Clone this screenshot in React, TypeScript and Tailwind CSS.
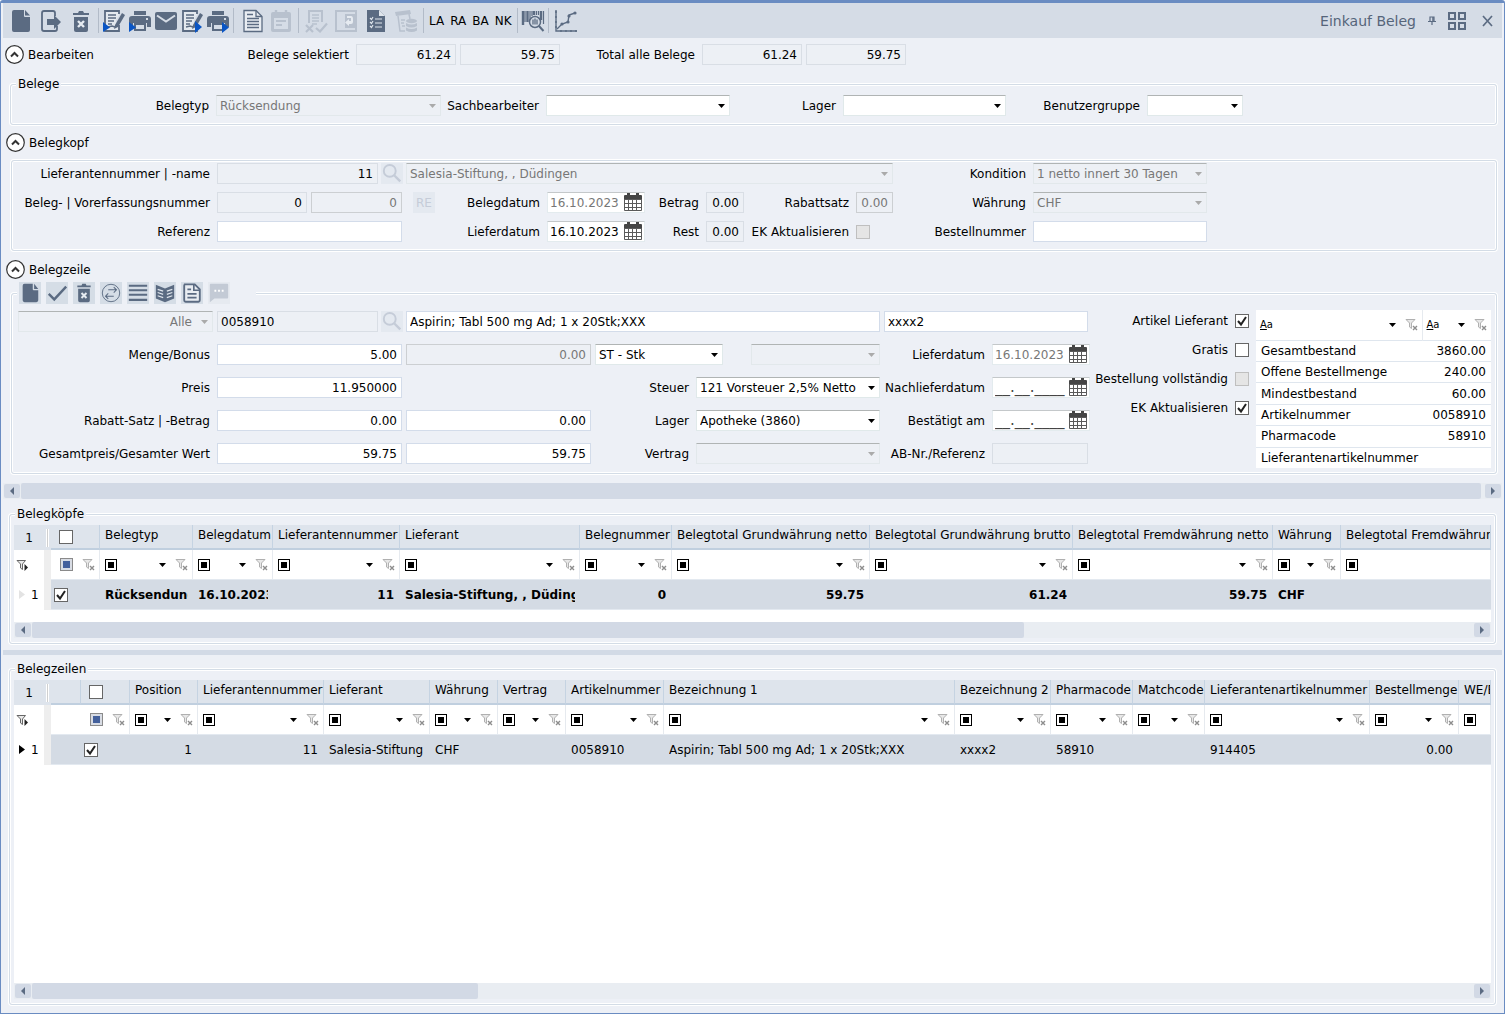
import React from 'react';
import clsx from 'clsx';

const DARK = '#5b6b82';
const LIGHT = '#b8c1ce';

/* ---------- icons ---------- */

function Icon({ children, size = 24 }: { children: React.ReactNode; size?: number }) {
  return (
    <svg width={size} height={size} viewBox="0 0 24 24" fill="none" aria-hidden="true" className="block">
      {children}
    </svg>
  );
}

const FileIcon = () => (
  <Icon>
    <path d="M5 1h10v6q0 1 1 1h5v13q0 2-2 2H5q-2 0-2-2V3q0-2 2-2z" fill={DARK} />
    <path d="M16 1l5 5.500h-5z" fill={DARK} />
  </Icon>
);

const ExitIcon = () => (
  <Icon>
    <path d="M16 7V4q0-2-2-2H5Q3 2 3 4v16q0 2 2 2h11q2 0 2-2v-3" stroke={DARK} strokeWidth="1.800" />
    <path d="M8 10h7V6l7 7-7 7v-4H8z" fill={DARK} />
  </Icon>
);

const TrashIcon = () => (
  <Icon>
    <path d="M4 4h5l1-2h4l1 2h5v2H4z" fill={DARK} />
    <path d="M5 8h14v13q0 2-2 2H7q-2 0-2-2z" fill={DARK} />
    <path d="M9 12l6 6M15 12l-6 6" stroke="#e6ebf1" strokeWidth="2.400" />
  </Icon>
);

const EditDocIcon = ({ play }: { play: 'left' | 'right' }) => (
  <Icon>
    <path d="M3 2h14v4l-3 5v4l3-1v8H3z" fill="#e4e9ef" />
    <path d="M17 5V2H3v20h14v-6" stroke={DARK} strokeWidth="1.800" />
    <path d="M6 6h8M6 9h8M6 12h6M6 15h4M6 18l4-1 3 1" stroke={DARK} strokeWidth="1.400" />
    <path d="M20 4l3 2-7 12-4 2 1-4z" fill={DARK} />
    {play === 'left' ? <path d="M1 13l7 5.500L1 23z" fill="#0a55c4" /> : <path d="M15 12l7 6-7 6z" fill="#0a55c4" />}
  </Icon>
);

const PrinterIcon = ({ play }: { play: 'left' | 'right' }) => (
  <Icon>
    <path d="M6 2h12v4H6z" fill={DARK} />
    <path d="M4 7h16q3 0 3 3v8h-4v-4H5v4H1v-8q0-3 3-3z" fill={DARK} />
    <path d="M7 15h10v6H7z" stroke={DARK} strokeWidth="2" />
    <rect x="18" y="9" width="2" height="2" fill="#d5dce6" />
    {play === 'left' ? <path d="M1 13l7 5.500L1 23z" fill="#0a55c4" /> : <path d="M16 13l7 5.500-7 5.500z" fill="#0a55c4" />}
  </Icon>
);

const MailIcon = () => (
  <Icon>
    <rect x="1" y="3" width="22" height="18" rx="2" fill={DARK} />
    <path d="M3 6.500l9 6 9-6" stroke="#d5dce6" strokeWidth="2" />
  </Icon>
);

const LinesDocIcon = () => (
  <Icon>
    <path d="M3 1.500h12l6 6v15H3z" fill="#e9edf2" stroke={DARK} strokeWidth="1.300" />
    <path d="M15 1.500v6h6" stroke={DARK} strokeWidth="1.300" />
    <path d="M6 5.500h6M6 9.500h12M6 12.500h12M6 15.500h12M6 18.500h12" stroke={DARK} strokeWidth="1.400" />
  </Icon>
);

const CalendarNoteIcon = () => (
  <Icon>
    <path d="M4 3h16q2 0 2 2v16q0 2-2 2H4q-2 0-2-2V5q0-2 2-2z" fill={LIGHT} />
    <path d="M5 9h14v11H5z" fill="#d5dce6" />
    <path d="M7 1v5M17 1v5" stroke={LIGHT} strokeWidth="2.400" />
    <path d="M7 12h10M7 16h6" stroke={LIGHT} strokeWidth="2" />
  </Icon>
);

const DocCheckIcon = () => (
  <Icon>
    <path d="M5 14V2h13v11" stroke={LIGHT} strokeWidth="2" />
    <path d="M8 6h7M8 9h7M8 12h7M8 15h5" stroke={LIGHT} strokeWidth="1.500" />
    <path d="M2 16l7 7M9 16l-7 7M12 19l4 3.500 7-8" stroke={LIGHT} strokeWidth="2.200" />
  </Icon>
);

const DoorIcon = () => (
  <Icon>
    <path d="M2 2h20v20H2z" stroke={LIGHT} strokeWidth="2" />
    <path d="M11 5h11v14H11z" fill={LIGHT} />
    <path d="M13 7h4q2 0 2 3v3q0 2-2 2h-2v2l-4-3.500 4-3.500v2h2V9h-4z" fill="#e6ebf1" />
  </Icon>
);

const ChecklistIcon = () => (
  <Icon>
    <path d="M3 1h12l6 6v16H3z" fill={DARK} />
    <path d="M15 1v6h6z" fill="#dfe5ec" />
    <path d="M6 9l1.500 1.500L9 8M6 13l1.500 1.500L9 12M6 17l1.500 1.500L9 16M11 10h7M11 14h7M11 18h7" stroke="#dfe5ec" strokeWidth="1.200" />
  </Icon>
);

const CoinsIcon = () => (
  <Icon>
    <path d="M1 3l15-2 1 4L2 7z" fill={LIGHT} />
    <path d="M4 7l2 15h5M15 5l1 5" stroke={LIGHT} strokeWidth="1.500" />
    <path d="M7 11h4M7 14h3M8 17h3" stroke={LIGHT} strokeWidth="1.300" />
    <ellipse cx="17.500" cy="12" rx="5.500" ry="2.200" fill={LIGHT} />
    <path d="M12 14q5.500 3 11 0v3q-5.500 3-11 0zM12 18.500q5.500 3 11 0v3q-5.500 3-11 0z" fill={LIGHT} />
  </Icon>
);

const BarcodeIcon = () => (
  <Icon>
    <path d="M2 2v14M6.500 2v11M13 2v4M20 2v9" stroke={DARK} strokeWidth="2.400" />
    <path d="M4 2v11M9 2v9M11 2v5M15.500 2v4M17.500 2v4M22.500 2v13" stroke={DARK} strokeWidth="1.200" />
    <circle cx="14" cy="13" r="5.500" stroke={DARK} strokeWidth="1.500" fill="#d5dce6" />
    <path d="M12 10.500v5M14 9.500v6M16 10.500v5" stroke={DARK} strokeWidth="1.300" />
    <path d="M18 17l4.500 5" stroke={DARK} strokeWidth="2" />
  </Icon>
);

const ChartIcon = () => (
  <Icon>
    <path d="M2 1v21h21M1 3h2M1 8h2M1 13h2M1 18h2M7 23v-2M12 23v-2M17 23v-2M22 23v-2" stroke={DARK} strokeWidth="1.400" />
    <path d="M3 20l5-5 6-2 1-7 6-2" stroke={DARK} strokeWidth="1.400" />
    <g fill={DARK}>
      <circle cx="8" cy="15" r="1.600" />
      <circle cx="14" cy="13" r="1.600" />
      <circle cx="15" cy="7" r="1.600" />
      <circle cx="21" cy="4" r="1.600" />
    </g>
  </Icon>
);

const CheckIcon = () => (
  <Icon size={22}>
    <path d="M3 13l6 6L22 5" stroke={DARK} strokeWidth="2.600" />
  </Icon>
);

const SwapIcon = () => (
  <Icon size={22}>
    <circle cx="12" cy="12" r="9.500" stroke={DARK} strokeWidth="1" />
    <path d="M9 8.500h8.500M15 5.500l3 3-3 3M15 15.500H6.500M9 12.500l-3 3 3 3" stroke={DARK} strokeWidth="1.100" />
  </Icon>
);

const RowsIcon = () => (
  <Icon size={22}>
    <path d="M2 4h20M2 9h20M2 14h20M2 19.500h20" stroke={DARK} strokeWidth="2.200" />
  </Icon>
);

const BookIcon = () => (
  <Icon size={22}>
    <path d="M2 3l10 4 10-4v15l-10 4-10-4z" fill={DARK} />
    <path d="M4 8l6 2M4 11.500l6 2M4 15l6 2M20 8l-6 2M20 11.500l-6 2M20 15l-6 2" stroke="#dfe5ec" strokeWidth="1.300" />
  </Icon>
);

const NoteIcon = () => (
  <Icon size={22}>
    <path d="M4 2.500h11l5.500 5.500v12q0 1.500-1.500 1.500H5q-1.500 0-1.500-1.500V4z" stroke={DARK} strokeWidth="2" fill="#e9edf2" />
    <path d="M14 2.500V9h6.500M7 8h4M7 13h10M7 17h10" stroke={DARK} strokeWidth="1.800" />
  </Icon>
);

const ChatIcon = () => (
  <Icon size={22}>
    <path d="M3 2h18q1 0 1 1v14q0 1-1 1H7l-5 4V3q0-1 1-1z" fill="#c3cad5" />
    <path d="M7 9.500h2M11 9.500h2M15 9.500h2" stroke="#fff" strokeWidth="2" />
  </Icon>
);

const SearchIcon = () => (
  <Icon size={21}>
    <circle cx="10" cy="9" r="6.800" stroke="#c5ccd8" strokeWidth="2.200" />
    <path d="M15 14l7 7" stroke="#c5ccd8" strokeWidth="2.800" />
  </Icon>
);

const CalendarIcon = () => (
  <svg width="18" height="19" viewBox="0 0 18 19" aria-hidden="true" className="block">
    <path d="M0 3q0-1 1-1h16q1 0 1 1v4H0zM3 0h3v4H3zM12 0h3v4h-3z" fill="#454545" />
    <path d="M0 6h18v11q0 1-1 1H1q-1 0-1-1z" fill="#5a5a5a" />
    <g fill="#fff">
      {[7, 11, 15].map((y) => [1, 5, 9, 13].map((x) => <rect key={`${x}-${y}`} x={x} y={y} width={x === 13 ? 4 : 3} height={y === 15 ? 2 : 3} />))}
    </g>
  </svg>
);

const Arrow = ({ color = '#000' }: { color?: string }) => (
  <svg width="7" height="4" viewBox="0 0 7 4" aria-hidden="true" className="block">
    <path d="M0 0h7L3.500 4z" fill={color} />
  </svg>
);

const FunnelIcon = () => (
  <svg width="13" height="13" viewBox="0 0 13 13" fill="none" aria-hidden="true" className="block">
    <path d="M1 1.500h9L6.500 5v5.500L4.500 9V5z" fill="#e8e8e8" stroke="#b0b0b0" />
    <path d="M8 8l4 4M12 8l-4 4" stroke="#8d8d8d" strokeWidth="1.400" />
  </svg>
);

const FunnelPlayIcon = () => (
  <svg width="13" height="12" viewBox="0 0 13 12" fill="none" aria-hidden="true" className="block">
    <path d="M1 1.500h8.500L6.500 5v5.500L4.500 9V5z" fill="#e8e8e8" stroke="#666" />
    <path d="M8.500 5l3.500 3.500L8.500 12z" fill="#222" />
  </svg>
);

/* ---------- form controls ---------- */

function Label({ htmlFor, className, children }: { htmlFor?: string; className?: string; children: React.ReactNode }) {
  return (
    <label htmlFor={htmlFor} className={clsx('shrink-0 whitespace-nowrap pr-[7px] text-right', className)}>
      {children}
    </label>
  );
}

interface FieldProps {
  id: string;
  value?: string;
  label?: string;
  className?: string;
  tone?: 'edit' | 'read' | 'off';
  left?: boolean;
}

function Field({ id, value = '', label, className, tone = 'edit', left }: FieldProps) {
  return (
    <input
      id={id}
      aria-label={label}
      defaultValue={value}
      readOnly={tone === 'read'}
      disabled={tone === 'off'}
      className={clsx(
        'h-[21px] min-w-0 shrink-0 border',
        left ? 'px-[3px]' : 'px-1 text-right',
        tone === 'edit' && 'border-[#d3dcea] bg-white',
        tone === 'read' && 'border-[#d9dee5] bg-[#edf0f5]',
        tone === 'off' && 'border-[#cccfd2] bg-[#edf0f5] text-[#777]',
        className,
      )}
    />
  );
}

function Select({ id, value = '', label, className, off, right }: { id: string; value?: string; label?: string; className?: string; off?: boolean; right?: boolean }) {
  return (
    <span className={clsx('grid shrink-0 items-center', className)}>
      <select
        id={id}
        aria-label={label}
        disabled={off}
        className={clsx(
          'col-start-1 row-start-1 h-[21px] w-full appearance-none border border-t-[#b0b4b4] pl-[3px] pr-5 opacity-100',
          off ? 'border-[#e2e8eb] bg-[#edf0f5] text-[#777]' : 'border-[#e0e9ea] bg-white',
          right && 'text-right [text-align-last:right]',
        )}
      >
        <option>{value}</option>
      </select>
      <span className="pointer-events-none col-start-1 row-start-1 justify-self-end pr-[5px]">
        <Arrow color={off ? '#aaa' : '#000'} />
      </span>
    </span>
  );
}

function DateField({ id, value, dim, empty }: { id: string; value?: string; dim?: boolean; empty?: boolean }) {
  return (
    <span className="flex h-[21px] w-[98px] shrink-0 items-center justify-between border border-[#e3ebee] border-t-[#c4c8ca] bg-white pr-[2px]">
      <input
        id={id}
        defaultValue={empty ? '__.__.____' : value}
        className={clsx('h-[19px] w-[75px] bg-transparent pl-[2px]', dim && 'text-[#777]', empty && 'text-[15px] text-[#444]')}
      />
      <button type="button" aria-label="Kalender">
        <CalendarIcon />
      </button>
    </span>
  );
}

function SearchButton({ title }: { title: string }) {
  return (
    <button type="button" aria-label={title} className="mx-[3px] h-[21px] w-[22px] shrink-0 bg-[#e4e9f0]">
      <SearchIcon />
    </button>
  );
}

function Checkbox({ id, label, checked, disabled }: { id?: string; label?: string; checked?: boolean; disabled?: boolean }) {
  return (
    <span className="grid size-[14px] shrink-0">
      <input
        id={id}
        type="checkbox"
        aria-label={label}
        defaultChecked={checked}
        disabled={disabled}
        className={clsx(
          'peer col-start-1 row-start-1 size-[14px] appearance-none border',
          disabled ? 'border-[#bfbfbf] bg-[#e5e5e5]' : 'border-[#666] bg-white',
        )}
      />
      <svg viewBox="0 0 14 14" aria-hidden="true" className="pointer-events-none invisible col-start-1 row-start-1 size-[14px] peer-checked:visible">
        <path d="M3 7l3 3.500L11 3" fill="none" stroke="#222" strokeWidth="2" />
      </svg>
    </span>
  );
}

function SectionHeader({ title, children }: { title: string; children?: React.ReactNode }) {
  return (
    <div className="flex h-[21px] items-center">
      <button type="button" aria-expanded="true" className="flex w-[89px] shrink-0 items-center gap-1">
        <svg width="20" height="20" viewBox="0 0 20 20" fill="none" aria-hidden="true" className="shrink-0">
          <circle cx="10.500" cy="9.500" r="8.800" fill="#fff" stroke="#333" strokeWidth="1.200" />
          <path d="M7 11.500L10.500 8l3.500 3.500" stroke="#333" strokeWidth="2" />
        </svg>
        {title}
      </button>
      {children}
    </div>
  );
}

const FIELDSET = 'min-w-0 rounded-[3px] border border-[#d3dce6] shadow-[0_0_0_1px_#fff,inset_0_0_0_1px_#fff]';
const LEGEND = 'h-4 bg-[#edf0f6] px-[2px] leading-4';

/* ---------- toolbar ---------- */

function ToolButton({ title, children, disabled }: { title: string; children: React.ReactNode; disabled?: boolean }) {
  return (
    <button type="button" aria-label={title} disabled={disabled} className="shrink-0">
      {children}
    </button>
  );
}

const Divider = () => <span className="h-[25px] w-px shrink-0 bg-[#b2bbc8]" />;

function Toolbar() {
  return (
    <header className="mx-[2px] flex h-[35px] items-center bg-[#d5dce6]">
      <div className="flex gap-[6px] pl-[6px] pr-[5px]">
        <ToolButton title="Neu"><FileIcon /></ToolButton>
        <ToolButton title="Verlassen"><ExitIcon /></ToolButton>
        <ToolButton title="Löschen"><TrashIcon /></ToolButton>
      </div>
      <Divider />
      <div className="flex gap-[2px] px-[3px]">
        <ToolButton title="Vorschau"><EditDocIcon play="left" /></ToolButton>
        <ToolButton title="Drucken"><PrinterIcon play="left" /></ToolButton>
        <ToolButton title="E-Mail"><MailIcon /></ToolButton>
        <ToolButton title="Vorschau weiter"><EditDocIcon play="right" /></ToolButton>
        <ToolButton title="Drucken weiter"><PrinterIcon play="right" /></ToolButton>
      </div>
      <Divider />
      <div className="flex gap-1 pl-[7px] pr-[5px]">
        <ToolButton title="Dokument"><LinesDocIcon /></ToolButton>
        <ToolButton title="Termin" disabled><CalendarNoteIcon /></ToolButton>
      </div>
      <Divider />
      <div className="flex gap-[6px] px-[5px]">
        <ToolButton title="Prüfen" disabled><DocCheckIcon /></ToolButton>
        <ToolButton title="Übernehmen" disabled><DoorIcon /></ToolButton>
        <ToolButton title="Checkliste"><ChecklistIcon /></ToolButton>
        <ToolButton title="Kosten" disabled><CoinsIcon /></ToolButton>
      </div>
      <Divider />
      <div className="flex gap-[6px] px-[5px]">
        {['LA', 'RA', 'BA', 'NK'].map((t) => (
          <button key={t} type="button">{t}</button>
        ))}
      </div>
      <Divider />
      <div className="flex px-[3px]">
        <ToolButton title="Barcode"><BarcodeIcon /></ToolButton>
      </div>
      <Divider />
      <div className="flex px-[5px]">
        <ToolButton title="Statistik"><ChartIcon /></ToolButton>
      </div>
      <h1 className="ml-auto whitespace-nowrap text-sm text-[#56657a]">Einkauf Beleg</h1>
      <button type="button" aria-label="Anheften" className="ml-3">
        <svg width="8" height="9" viewBox="0 0 8 9" fill="none" className="block">
          <path d="M2 5V1h4v4M0 5.500h8M4 5.500V9" stroke={DARK} strokeWidth="1.200" />
          <path d="M5 1v4" stroke={DARK} strokeWidth="1.500" />
        </svg>
      </button>
      <button type="button" aria-label="Kacheln" className="ml-3">
        <svg width="18" height="18" viewBox="0 0 18 18" fill="none" className="block">
          <path d="M1 1h6v6H1zM11 1h6v6h-6zM1 11h6v6H1zM11 11h6v6h-6z" stroke={DARK} strokeWidth="2" />
        </svg>
      </button>
      <button type="button" aria-label="Schliessen" className="ml-4 mr-[9px]">
        <svg width="11" height="12" viewBox="0 0 11 12" fill="none" className="block">
          <path d="M1 1l9 10M10 1L1 11" stroke={DARK} strokeWidth="1.700" />
        </svg>
      </button>
    </header>
  );
}

/* ---------- form sections ---------- */

function Belege() {
  return (
    <fieldset className={clsx(FIELDSET, 'ml-[9px] mr-[7px] mt-[11px] pb-2 pl-[5px] pt-[3px]')}>
      <legend className={LEGEND}>Belege</legend>
      <div className="flex items-center">
        <Label htmlFor="belegtyp" className="w-[200px]">Belegtyp</Label>
        <Select id="belegtyp" value="Rücksendung" off className="w-[225px]" />
        <Label htmlFor="sachbearbeiter" className="w-[105px]">Sachbearbeiter</Label>
        <Select id="sachbearbeiter" className="w-[184px]" />
        <Label htmlFor="lager" className="w-[113px]">Lager</Label>
        <Select id="lager" className="w-[163px]" />
        <Label htmlFor="benutzergruppe" className="w-[141px]">Benutzergruppe</Label>
        <Select id="benutzergruppe" className="w-[96px]" />
      </div>
    </fieldset>
  );
}

function Belegkopf() {
  return (
    <fieldset aria-label="Belegkopf" className={clsx(FIELDSET, 'ml-[10px] mr-[7px] mt-[7px] flex flex-col gap-2 pb-2 pl-[5px] pt-[2px]')}>
      <div className="flex items-center">
        <Label htmlFor="lieferantennummer" className="w-[200px]">Lieferantennummer | -name</Label>
        <Field id="lieferantennummer" value="11" tone="read" className="w-[161px]" />
        <SearchButton title="Lieferant suchen" />
        <Select id="lieferantenname" label="Lieferantenname" value="Salesia-Stiftung, , Düdingen" off className="w-[487px]" />
        <Label htmlFor="kondition" className="w-[140px]">Kondition</Label>
        <Select id="kondition" value="1 netto innert 30 Tagen" off className="w-[174px]" />
      </div>
      <div className="flex items-center">
        <Label htmlFor="belegnummer" className="w-[200px]">Beleg- | Vorerfassungsnummer</Label>
        <Field id="belegnummer" value="0" tone="read" className="w-[90px]" />
        <Field id="vorerfassung" label="Vorerfassungsnummer" value="0" tone="off" className="ml-1 w-[91px]" />
        <button type="button" disabled className="ml-[11px] h-[21px] w-[22px] bg-[#e4e9f0] text-[#c5ccd8]">RE</button>
        <Label htmlFor="belegdatum" className="w-[112px]">Belegdatum</Label>
        <DateField id="belegdatum" value="16.10.2023" dim />
        <Label htmlFor="betrag" className="w-[61px]">Betrag</Label>
        <Field id="betrag" value="0.00" tone="read" className="w-[38px]" />
        <Label htmlFor="rabattsatz" className="w-[112px]">Rabattsatz</Label>
        <Field id="rabattsatz" value="0.00" tone="off" className="w-[37px]" />
        <Label htmlFor="waehrung" className="w-[140px]">Währung</Label>
        <Select id="waehrung" value="CHF" off className="w-[174px]" />
      </div>
      <div className="flex items-center">
        <Label htmlFor="referenz" className="w-[200px]">Referenz</Label>
        <Field id="referenz" left className="w-[185px]" />
        <Label htmlFor="lieferdatum" className="w-[145px]">Lieferdatum</Label>
        <DateField id="lieferdatum" value="16.10.2023" />
        <Label htmlFor="rest" className="w-[61px]">Rest</Label>
        <Field id="rest" value="0.00" tone="read" className="w-[38px]" />
        <Label htmlFor="ek-kopf" className="w-[112px]">EK Aktualisieren</Label>
        <Checkbox id="ek-kopf" disabled />
        <Label htmlFor="bestellnummer" className="w-[163px]">Bestellnummer</Label>
        <Field id="bestellnummer" left className="w-[174px]" />
      </div>
    </fieldset>
  );
}

const lineTools = [
  { title: 'Neue Zeile', icon: <Icon size={22}><path d="M6 2h9v6q0 1 1 1h5v11q0 2-2 2H6q-2 0-2-2V4q0-2 2-2zM16.500 2L21 7.500h-4.500z" fill={DARK} /></Icon> },
  { title: 'Speichern', icon: <CheckIcon /> },
  { title: 'Zeile löschen', icon: <span className="block p-px"><svg width="20" height="20" viewBox="0 0 24 24" className="block"><path d="M4 3h5l1-2h4l1 2h5v2H4zM5 7h14v14q0 2-2 2H7q-2 0-2-2z" fill={DARK} /><path d="M9 12l6 6M15 12l-6 6" stroke="#e6ebf1" strokeWidth="2.400" /></svg></span> },
  { title: 'Tauschen', icon: <SwapIcon /> },
  { title: 'Liste', icon: <RowsIcon /> },
  { title: 'Katalog', icon: <BookIcon /> },
  { title: 'Notiz', icon: <NoteIcon /> },
];

const stock = [
  ['Gesamtbestand', '3860.00'],
  ['Offene Bestellmenge', '240.00'],
  ['Mindestbestand', '60.00'],
  ['Artikelnummer', '0058910'],
  ['Pharmacode', '58910'],
  ['Lieferantenartikelnummer', ''],
];

const flags = [
  { id: 'artikel-lieferant', label: 'Artikel Lieferant', checked: true },
  { id: 'gratis', label: 'Gratis' },
  { id: 'vollstaendig', label: 'Bestellung vollständig', disabled: true },
  { id: 'ek-zeile', label: 'EK Aktualisieren', checked: true },
];

function Belegzeile() {
  return (
    <fieldset className={clsx(FIELDSET, 'ml-[10px] mr-[7px] mt-[2px] pb-[5px] pl-[5px] pt-[6px]')}>
      <legend className="flex h-[22px] gap-[5px] bg-[#edf0f6] pl-[2px] pr-[26px]">
        {lineTools.map((t) => (
          <button key={t.title} type="button" aria-label={t.title} className="size-[22px] bg-[#d5dde6]">
            {t.icon}
          </button>
        ))}
        <button type="button" aria-label="Kommentar" disabled className="size-[22px] bg-[#e6eaf0]"><ChatIcon /></button>
      </legend>
      <div className="flex items-start">
        <div className="flex w-[1074px] shrink-0 flex-col gap-3 pt-px">
          <div className="flex items-center pl-px">
            <Select id="filter" label="Filter" value="Alle" off right className="w-[195px]" />
            <Field id="artikel" label="Artikel" value="0058910" left tone="read" className="ml-1 w-[161px]" />
            <SearchButton title="Artikel suchen" />
            <Field id="bezeichnung1" label="Bezeichnung 1" value="Aspirin; Tabl 500 mg Ad; 1 x 20Stk;XXX" left className="w-[474px]" />
            <Field id="bezeichnung2" label="Bezeichnung 2" value="xxxx2" left className="ml-1 w-[204px]" />
          </div>
          <div className="flex items-center">
            <Label htmlFor="menge" className="w-[200px]">Menge/Bonus</Label>
            <Field id="menge" value="5.00" className="w-[185px]" />
            <Field id="bonus" label="Bonus" value="0.00" tone="off" className="ml-1 w-[185px]" />
            <Select id="einheit" label="Einheit" value="ST - Stk" className="ml-1 w-[128px]" />
            <Select id="packung" label="Packung" off className="ml-7 w-[129px]" />
            <Label htmlFor="lieferdatum-zeile" className="w-[112px]">Lieferdatum</Label>
            <DateField id="lieferdatum-zeile" value="16.10.2023" dim />
          </div>
          <div className="flex items-center">
            <Label htmlFor="preis" className="w-[200px]">Preis</Label>
            <Field id="preis" value="11.950000" className="w-[185px]" />
            <Label htmlFor="steuer" className="w-[294px]">Steuer</Label>
            <Select id="steuer" value="121 Vorsteuer 2,5% Netto" className="w-[184px]" />
            <Label htmlFor="nachlieferdatum" className="w-[112px]">Nachlieferdatum</Label>
            <DateField id="nachlieferdatum" empty />
          </div>
          <div className="flex items-center">
            <Label htmlFor="rabatt" className="w-[200px]">Rabatt-Satz | -Betrag</Label>
            <Field id="rabatt" value="0.00" className="w-[185px]" />
            <Field id="rabattbetrag" label="Rabatt-Betrag" value="0.00" className="ml-1 w-[185px]" />
            <Label htmlFor="lager-zeile" className="w-[105px]">Lager</Label>
            <Select id="lager-zeile" value="Apotheke (3860)" className="w-[184px]" />
            <Label htmlFor="bestaetigt" className="w-[112px]">Bestätigt am</Label>
            <DateField id="bestaetigt" empty />
          </div>
          <div className="flex items-center">
            <Label htmlFor="gesamtpreis" className="w-[200px]">Gesamtpreis/Gesamter Wert</Label>
            <Field id="gesamtpreis" value="59.75" className="w-[185px]" />
            <Field id="gesamtwert" label="Gesamter Wert" value="59.75" className="ml-1 w-[185px]" />
            <Label htmlFor="vertrag" className="w-[105px]">Vertrag</Label>
            <Select id="vertrag" off className="w-[184px]" />
            <Label htmlFor="ab-nr" className="w-[112px]">AB-Nr./Referenz</Label>
            <Field id="ab-nr" tone="read" className="w-[96px]" />
          </div>
        </div>
        <div className="flex w-[158px] shrink-0 flex-col items-end gap-2">
          {flags.map((f) => (
            <div key={f.id} className="flex h-[21px] items-center">
              <Label htmlFor={f.id}>{f.label}</Label>
              <Checkbox id={f.id} checked={f.checked} disabled={f.disabled} />
            </div>
          ))}
        </div>
        <table className="ml-[7px] mr-[5px] h-[158px] flex-1 border-collapse bg-white">
          <thead>
            <tr className="h-[30px] border-b border-[#dfe6ee]">
              {['Bezeichnung', 'Wert'].map((name, i) => (
                <th key={name} aria-label={name} className={clsx('font-normal', i === 0 ? 'border-r border-[#e6eaef]' : 'w-[69px]')}>
                  <div className="flex items-center gap-[9px] pl-1 pr-1">
                    <span className="mr-auto text-[10px]"><u>A</u>a</span>
                    <Arrow />
                    <FunnelIcon />
                  </div>
                </th>
              ))}
            </tr>
          </thead>
          <tbody>
            {stock.map(([name, value]) => (
              <tr key={name} className="border-b border-[#dfe6ee] last:border-0">
                {value ? (
                  <>
                    <td className="pl-[5px]">{name}</td>
                    <td className="pr-[5px] text-right">{value}</td>
                  </>
                ) : (
                  <td colSpan={2} className="pl-[5px]">{name}</td>
                )}
              </tr>
            ))}
          </tbody>
        </table>
      </div>
    </fieldset>
  );
}

/* ---------- data grids ---------- */

function ScrollBar({ thumb, className }: { thumb: number; className?: string }) {
  return (
    <div className={clsx('flex h-4 shrink-0 items-center gap-px bg-[#e9edf2] px-px', className)}>
      <button type="button" aria-label="Nach links" className="flex h-[14px] w-4 items-center justify-center rounded-[2px] bg-[#d2d9e5]">
        <svg width="4" height="8" viewBox="0 0 4 8"><path d="M4 0v8L0 4z" fill={DARK} /></svg>
      </button>
      <div className="h-4 flex-1 pr-[3px]">
        <div className="h-4 rounded-[2px] bg-[#d2d9e5]" style={{ width: `${thumb}%` }} />
      </div>
      <button type="button" aria-label="Nach rechts" className="flex h-[14px] w-4 items-center justify-center rounded-[2px] bg-[#d2d9e5]">
        <svg width="4" height="8" viewBox="0 0 4 8"><path d="M0 0v8l4-4z" fill={DARK} /></svg>
      </button>
    </div>
  );
}

interface Column {
  title: string;
  width?: number;
  value?: string;
  right?: boolean;
}

interface GridProps {
  columns: Column[];
  leading?: boolean;
  bold?: boolean;
}

function FilterCell({ last }: { last?: boolean }) {
  return (
    <div className="flex items-center gap-[9px] pl-[5px] pr-1">
      <button type="button" aria-label="Filterart" className="mr-auto flex size-3 shrink-0 items-center justify-center border border-black bg-white">
        <span className="size-[6px] bg-black" />
      </button>
      {!last && (
        <>
          <Arrow />
          <FunnelIcon />
        </>
      )}
    </div>
  );
}

function Grid({ columns, leading, bold }: GridProps) {
  const th = 'h-[25px] overflow-hidden border-b-2 border-r border-b-[#c0cfdf] border-r-[#c5d3e2] bg-[#dee4ec] p-0 font-normal';
  const filter = 'h-[29px] overflow-hidden border-r border-[#e6eaef] p-0';
  const cell = 'h-[31px] overflow-hidden border-y border-[#e3e9f0] bg-[#d4dbe4] p-0';

  return (
    <div className="overflow-hidden">
      <table className="w-full table-fixed border-separate border-spacing-0">
        <colgroup>
          <col className="w-[30px]" />
          <col className="w-[7px]" />
          {leading && <col className="w-[30px]" />}
          <col className="w-[49px]" />
          {columns.map((c) => (
            <col key={c.title} style={{ width: c.width }} />
          ))}
        </colgroup>
        <thead>
          <tr>
            <th className="bg-[#dee4ec] p-0 font-normal">1</th>
            <th aria-hidden="true" className="bg-[#dee4ec] p-0">
              <div className="ml-[2px] h-[18px] w-[3px] border-x border-white bg-[#d0d0d0]" />
            </th>
            {leading && <th aria-hidden="true" className={th} />}
            <th className={th}>
              <div className="pl-2">
                <Checkbox label="Alle auswählen" />
              </div>
            </th>
            {columns.map((c) => (
              <th key={c.title} className={clsx(th, 'whitespace-nowrap pl-[5px] pt-[2px] text-left align-top')}>
                {c.title}
              </th>
            ))}
          </tr>
          <tr>
            <td className="p-0 pl-[2px]"><FunnelPlayIcon /></td>
            <td className="bg-[#eeeeee] p-0" />
            {leading && <td className="p-0" />}
            <td className={filter}>
              <div className="flex items-center justify-between pl-[9px] pr-1">
                <button type="button" aria-label="Auswahl filtern" className="flex size-[13px] items-center justify-center border border-[#8a8a8a] bg-[#d8dce4]">
                  <span className="size-[7px] bg-[#43609c]" />
                </button>
                <FunnelIcon />
              </div>
            </td>
            {columns.map((c, i) => (
              <td key={c.title} className={filter}>
                <FilterCell last={i === columns.length - 1} />
              </td>
            ))}
          </tr>
        </thead>
        <tbody>
          <tr className={bold ? 'font-bold' : ''}>
            <td className="p-0 font-normal">
              <div className="flex items-center gap-[6px] pl-[5px]">
                <svg width="6" height="9" viewBox="0 0 6 9" aria-hidden="true">
                  <path d="M0 0v9l6-4.500z" fill={leading ? '#000' : '#e3e3e3'} />
                </svg>
                1
              </div>
            </td>
            <td className="bg-[#eeeeee] p-0" />
            {leading && <td className={cell} />}
            <td className={cell}>
              <div className="pl-[3px]">
                <Checkbox label="Zeile 1 auswählen" checked />
              </div>
            </td>
            {columns.map((c) => (
              <td key={c.title} className={cell}>
                <div className={clsx('overflow-hidden whitespace-nowrap pl-[5px]', c.right && 'pr-px text-right')}>
                  <div className="mr-[5px] overflow-hidden">{c.value}</div>
                </div>
              </td>
            ))}
          </tr>
        </tbody>
      </table>
    </div>
  );
}

const headColumns: Column[] = [
  { title: 'Belegtyp', width: 93, value: 'Rücksendung' },
  { title: 'Belegdatum', width: 80, value: '16.10.2023' },
  { title: 'Lieferantennummer', width: 127, value: '11', right: true },
  { title: 'Lieferant', width: 180, value: 'Salesia-Stiftung, , Düdingen' },
  { title: 'Belegnummer', width: 92, value: '0', right: true },
  { title: 'Belegtotal Grundwährung netto', width: 198, value: '59.75', right: true },
  { title: 'Belegtotal Grundwährung brutto', width: 203, value: '61.24', right: true },
  { title: 'Belegtotal Fremdwährung netto', width: 200, value: '59.75', right: true },
  { title: 'Währung', width: 68, value: 'CHF' },
  { title: 'Belegtotal Fremdwährung brutto' },
];

const lineColumns: Column[] = [
  { title: 'Position', width: 68, value: '1', right: true },
  { title: 'Lieferantennummer', width: 126, value: '11', right: true },
  { title: 'Lieferant', width: 106, value: 'Salesia-Stiftung' },
  { title: 'Währung', width: 68, value: 'CHF' },
  { title: 'Vertrag', width: 68 },
  { title: 'Artikelnummer', width: 98, value: '0058910' },
  { title: 'Bezeichnung 1', width: 291, value: 'Aspirin; Tabl 500 mg Ad; 1 x 20Stk;XXX' },
  { title: 'Bezeichnung 2', width: 96, value: 'xxxx2' },
  { title: 'Pharmacode', width: 82, value: '58910' },
  { title: 'Matchcode', width: 72 },
  { title: 'Lieferantenartikelnummer', width: 165, value: '914405' },
  { title: 'Bestellmenge', width: 89, value: '0.00', right: true },
  { title: 'WE/Einheit' },
];

export default function App() {
  return (
    <main className="flex min-h-screen flex-col overflow-hidden rounded-t-[3px] border border-t-[3px] border-[#6a8cc2] bg-[#edf0f6] font-['DejaVu_Sans',Verdana,sans-serif] text-xs text-black">
      <Toolbar />

      <div className="ml-[3px] mt-[6px]">
        <SectionHeader title="Bearbeiten">
          <Label htmlFor="sel-brutto" className="w-[263px]">Belege selektiert</Label>
          <Field id="sel-brutto" value="61.24" tone="read" className="w-[100px]" />
          <Field id="sel-netto" label="Belege selektiert netto" value="59.75" tone="read" className="ml-1 w-[100px]" />
          <Label htmlFor="total-brutto" className="w-[142px]">Total alle Belege</Label>
          <Field id="total-brutto" value="61.24" tone="read" className="w-[100px]" />
          <Field id="total-netto" label="Total alle Belege netto" value="59.75" tone="read" className="ml-1 w-[100px]" />
        </SectionHeader>
      </div>
      <Belege />

      <div className="ml-1 mt-[7px]">
        <SectionHeader title="Belegkopf" />
      </div>
      <Belegkopf />

      <div className="ml-1 mt-2">
        <SectionHeader title="Belegzeile" />
      </div>
      <Belegzeile />

      <ScrollBar thumb={100} className="mx-[2px] mt-[9px]" />

      <fieldset className={clsx(FIELDSET, 'mx-2 mt-[7px] px-1 pb-[5px] pt-[3px]')}>
        <legend className={clsx(LEGEND, 'ml-px')}>Belegköpfe</legend>
        <div className="bg-white">
          <Grid columns={headColumns} bold />
          <ScrollBar thumb={69} className="mt-3" />
        </div>
      </fieldset>

      <div className="mx-[2px] mt-[6px] h-[5px] shrink-0 bg-[#d2dae6]" />

      <section className={clsx(FIELDSET, 'mx-2 mb-2 mt-[14px] flex flex-1 flex-col px-1 pb-[5px]')}>
        <h2 className={clsx(LEGEND, '-mt-[9px] mb-[3px] ml-px self-start')}>Belegzeilen</h2>
        <div className="flex flex-1 flex-col justify-between bg-white">
          <Grid columns={lineColumns} leading />
          <ScrollBar thumb={31} />
        </div>
      </section>
    </main>
  );
}
